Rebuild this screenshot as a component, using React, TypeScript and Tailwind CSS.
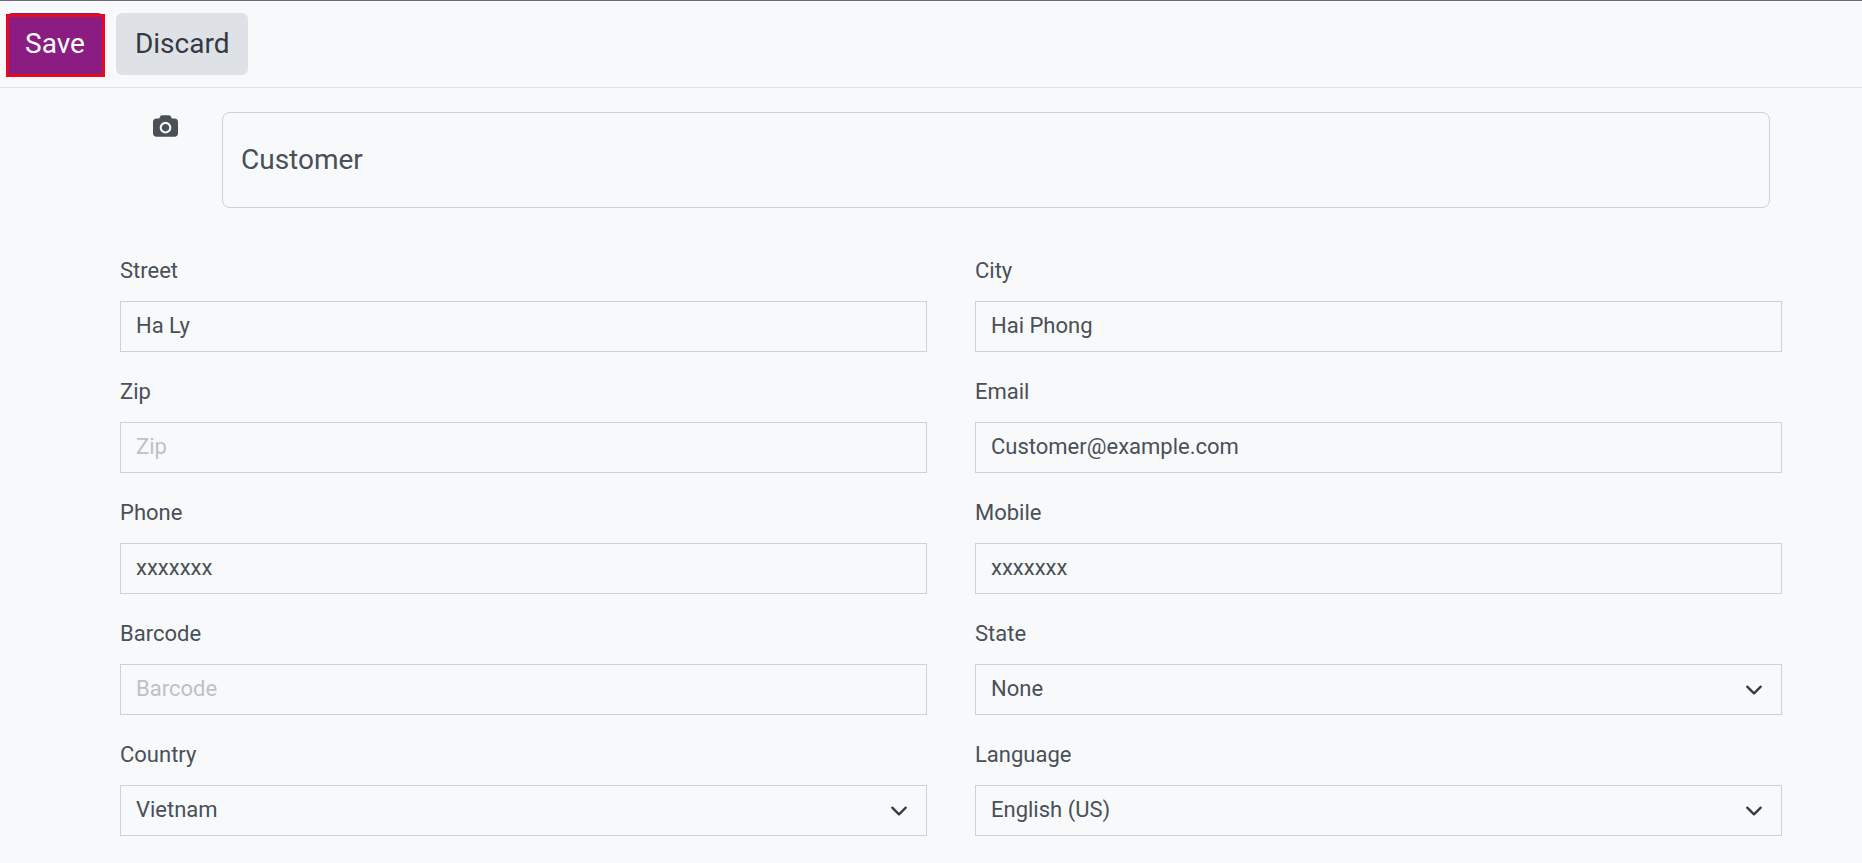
type FieldProps = {
    id: string
    label: string
    value?: string
    options?: string[]
}

const controlStyle = "block w-full h-[51px] border border-[#ced1d6] bg-transparent px-[15px] pb-[2px] text-[22px] text-[#495057] placeholder:text-[#bcc1c9] outline-none"

const Field = ({ id, label, value, options }: FieldProps) => {
    return (
        <div>
            <label htmlFor={id} className="block mb-3 text-[22px] leading-9 text-[#495057]">{label}</label>
            {options ? (
                <div className="relative">
                    <select id={id} defaultValue={value} className={`${controlStyle} appearance-none pr-12`}>
                        {options.map((option) => (
                            <option key={option}>{option}</option>
                        ))}
                    </select>
                    <svg viewBox="0 0 16 16" className="absolute right-[19px] inset-y-0 my-auto size-[18px] pointer-events-none" fill="none" stroke="#343a40" strokeWidth="2" strokeLinecap="round" strokeLinejoin="round">
                        <path d="m2 5 6 6 6-6" />
                    </svg>
                </div>
            ) : (
                <input id={id} type="text" defaultValue={value} placeholder={label} className={controlStyle} />
            )}
        </div>
    )
}

const fields: FieldProps[] = [
    { id: "street", label: "Street", value: "Ha Ly" },
    { id: "city", label: "City", value: "Hai Phong" },
    { id: "zip", label: "Zip" },
    { id: "email", label: "Email", value: "Customer@example.com" },
    { id: "phone", label: "Phone", value: "xxxxxxx" },
    { id: "mobile", label: "Mobile", value: "xxxxxxx" },
    { id: "barcode", label: "Barcode" },
    { id: "state", label: "State", value: "None", options: ["None"] },
    { id: "country", label: "Country", value: "Vietnam", options: ["Vietnam"] },
    { id: "language", label: "Language", value: "English (US)", options: ["English (US)"] },
]

const App = () => {
    return (
        <div className="min-h-screen bg-[#f8f9fb] border-t border-[#6b6b73] font-[Roboto,sans-serif] text-[#495057]">
            <header className="flex gap-3 border-b border-[#dee2e6] pl-[6px] py-3">
                <button type="button" className="relative h-[62px] rounded-md bg-[#8a1c82] px-[19px] text-[28px] text-white">
                    Save
                    <span className="absolute -right-px left-0 top-px -bottom-[2px] border-3 border-[#e60a1c]"></span>
                </button>
                <button type="button" className="h-[62px] rounded-md bg-[#dee2e6] px-[19px] text-[28px] text-[#343a40]">Discard</button>
            </header>

            <form className="pl-[120px] pr-20 pb-7">
                <div className="flex items-start pt-6 pr-3">
                    <button type="button" aria-label="Upload photo" className="mt-[3px] ml-[33px] mr-11 shrink-0">
                        <svg viewBox="0 0 1920 1664" className="w-[25px] h-[22px]" fill="#495057">
                            <path d="M960 672q119 0 203.500 84.500t84.500 203.500-84.500 203.500-203.500 84.500-203.500-84.500-84.500-203.500 84.500-203.500 203.500-84.500zM1664 256q106 0 181 75t75 181v896q0 106-75 181t-181 75H256q-106 0-181-75T0 1408V512q0-106 75-181t181-75h224l51-136q19-49 69.500-84.500T704 0h512q53 0 103.500 35.500T1389 120l51 136h224zM960 1408q185 0 316.500-131.500T1408 960t-131.500-316.500T960 512 643.500 643.500 512 960t131.500 316.500T960 1408z" />
                        </svg>
                    </button>
                    <input type="text" aria-label="Name" placeholder="Name" defaultValue="Customer" className="h-24 min-w-0 flex-1 rounded-lg border border-[#ced1d6] bg-transparent px-[18px] pb-[2px] text-[28px] outline-none" />
                </div>

                <div className="grid grid-cols-2 gap-x-12 gap-y-[22px] mt-[45px]">
                    {fields.map((field) => (
                        <Field key={field.id} {...field} />
                    ))}
                </div>
            </form>
        </div>
    )
}

export default App
